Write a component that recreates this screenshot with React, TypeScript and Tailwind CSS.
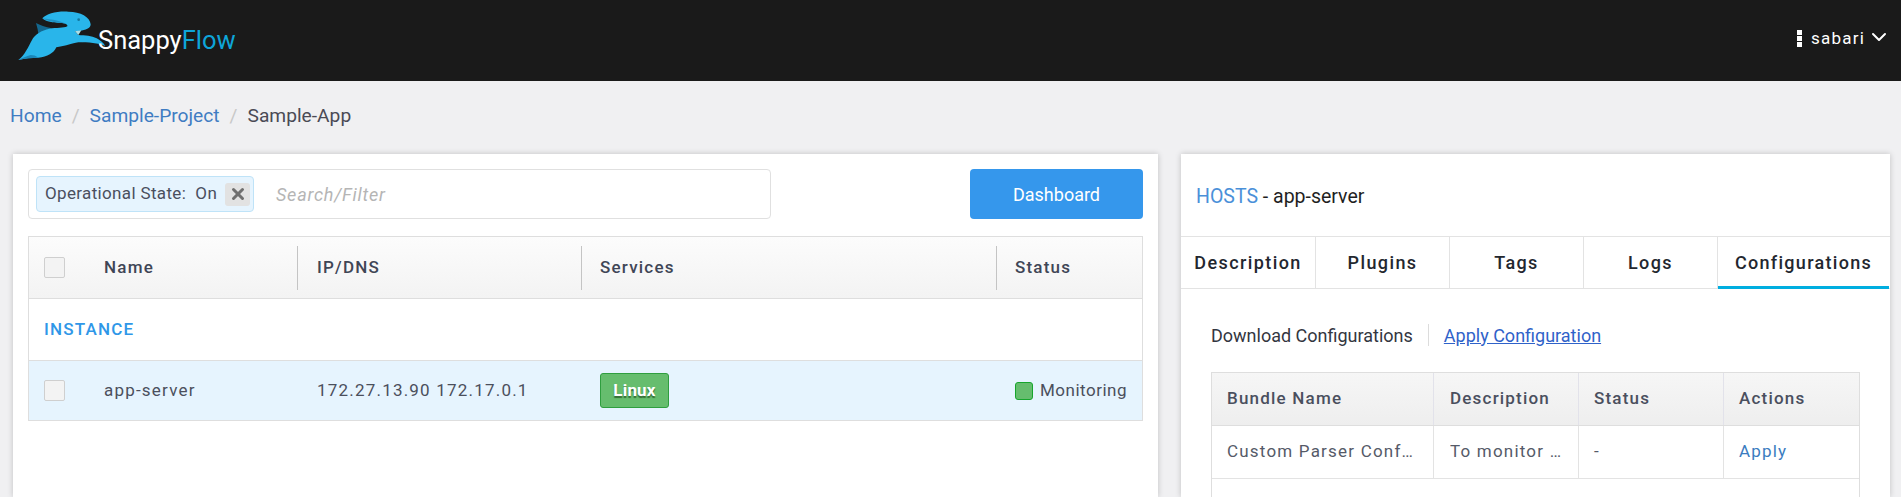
import { ChevronDown, X } from "lucide-react";

const font = "font-['Roboto',sans-serif]";

function Logo() {
  return (
    <div className="flex items-start pl-[10px] pt-[5px]">
      <svg width="96" height="60" viewBox="0 0 288 180" className="shrink-0">
        <path d="M78 54C90 60 105 66 126 70C105 78 92 85 85 92C85 80 82 68 78 54Z" fill="#14688f" />
        <path
          d="M25 165C45 150 55 125 66 105C74 88 95 76 118 71C140 68 160 70 172 64C174 59 165 54 150 54C130 54 108 50 97 40C110 26 140 18 175 20C212 20 240 36 242 58C242 70 226 76 210 77L195 79L205 90C225 91 245 92 260 100C270 106 280 113 286 123C265 114 235 112 205 112C190 114 175 120 155 124L139 127C132 144 112 156 85 158C65 158 45 160 25 165Z"
          fill="#29b5ea"
        />
        <path d="M97 40C110 48 130 52 150 54C160 54 168 56 172 60C160 49 125 43 97 40Z" fill="#1f93c4" />
        <path d="M25 165C45 160 65 158 85 158C78 152 70 150 62 150C50 154 36 159 25 165Z" fill="#1a86b8" />
        <path d="M195 79L214 76L205 90Z" fill="#a8dfe8" />
        <circle cx="206" cy="44" r="4" fill="#14789f" />
      </svg>
      <div className="-ml-[8px] mt-[23px] text-[25.5px] leading-none">
        <span className="text-white">Snappy</span>
        <span className="text-[#0ea5d8]">Flow</span>
      </div>
    </div>
  );
}

function Checkbox() {
  return <div className="h-[21px] w-[21px] rounded-[2px] border border-[#cfcfcf] bg-[#f3f3f3]" />;
}

function HeadCell({ label, className }: { label: string; className: string }) {
  return (
    <div className={`flex h-full items-center ${className}`}>
      <span className="text-[17px] font-medium tracking-[1.2px] text-[#3f4656]">{label}</span>
    </div>
  );
}

function HostTable() {
  return (
    <div className="mt-[17px] border border-[#dedede]">
      <div className="flex h-[62px] items-center border-b border-[#dedede] bg-gradient-to-b from-[#fcfcfc] to-[#f3f3f3]">
        <div className="flex w-[75px] justify-start pl-[15px]">
          <Checkbox />
        </div>
        <HeadCell label="Name" className="w-[193px]" />
        <div className="h-[44px] w-px bg-[#c4c4c4]" />
        <HeadCell label="IP/DNS" className="w-[283px] pl-[19px]" />
        <div className="h-[44px] w-px bg-[#c4c4c4]" />
        <HeadCell label="Services" className="w-[414px] pl-[18px]" />
        <div className="h-[44px] w-px bg-[#c4c4c4]" />
        <HeadCell label="Status" className="flex-1 pl-[18px]" />
      </div>
      <div className="flex h-[62px] items-center border-b border-[#dedede] pl-[15px] text-[17px] font-medium tracking-[1.2px] text-[#2f97e8]">
        INSTANCE
      </div>
      <div className="flex h-[59px] items-center bg-[#e6f4fe] text-[17px] tracking-[1.2px] text-[#4b4f5c]">
        <div className="flex w-[75px] pl-[15px]">
          <Checkbox />
        </div>
        <div className="w-[194px]">app-server</div>
        <div className="w-[284px] pl-[19px]">172.27.13.90 172.17.0.1</div>
        <div className="w-[415px] pl-[18px]">
          <span className="flex h-[35px] w-[69px] items-center justify-center rounded-[3px] border border-[#2f9e3f] bg-[#66bd6e] text-[17px] font-bold tracking-[0.2px] text-white [text-shadow:0_2px_1px_rgba(40,90,40,0.8)]">
            Linux
          </span>
        </div>
        <div className="flex flex-1 items-center pl-[18px]">
          <span className="h-[18px] w-[18px] rounded-[3px] border border-[#17a52d] bg-[#66bd6e]" />
          <span className="ml-[7px] tracking-[0.5px]">Monitoring</span>
        </div>
      </div>
    </div>
  );
}

function Tabs() {
  const tabs = ["Description", "Plugins", "Tags", "Logs"];
  return (
    <div className="flex h-[53px] border-y border-[#e3e3e3]">
      {tabs.map((t) => (
        <div
          key={t}
          className="flex w-[134px] items-center justify-center border-r border-[#e3e3e3] text-[18px] font-medium tracking-[1.4px] text-[#23272f] first:w-[135px]"
        >
          {t}
        </div>
      ))}
      <div className="-mb-px mr-px flex flex-1 items-center justify-center border-b-[3px] border-[#00aee0] pt-[2px] text-[18px] font-medium tracking-[1.3px] text-[#23272f]">
        Configurations
      </div>
    </div>
  );
}

function BundleTable() {
  return (
    <div className="mt-[26px] border-x border-t border-[#dedede]">
      <div className="grid h-[53px] grid-cols-[221px_145px_145px_1fr] border-b border-[#dedede] bg-gradient-to-b from-[#f6f6f6] to-[#eeeeee] text-[17px] font-medium tracking-[1.2px] text-[#4a4f5e]">
        <div className="flex items-center pl-[15px]">Bundle Name</div>
        <div className="flex items-center border-l border-[#e2e2ea] pl-[16px]">Description</div>
        <div className="flex items-center border-l border-[#e2e2ea] pl-[15px]">Status</div>
        <div className="flex items-center border-l border-[#e2e2ea] pl-[15px]">Actions</div>
      </div>
      <div className="grid h-[53px] grid-cols-[221px_145px_145px_1fr] border-b border-[#e3e3e3] text-[17px] tracking-[1.2px] text-[#555a68]">
        <div className="flex min-w-0 items-center pl-[15px] pr-[17px]">
          <span className="truncate">Custom Parser Configuration</span>
        </div>
        <div className="flex min-w-0 items-center border-l border-[#e3e3e3] pl-[16px] pr-[14px]">
          <span className="truncate">To monitor custom logs</span>
        </div>
        <div className="flex items-center border-l border-[#e3e3e3] pl-[15px]">-</div>
        <div className="flex items-center border-l border-[#e3e3e3] pl-[15px] text-[#3b7cc0]">Apply</div>
      </div>
      <div className="h-[40px]" />
    </div>
  );
}

export default function App() {
  return (
    <div className={`${font} flex h-[497px] flex-col overflow-hidden bg-[#f0f0f2]`}>
      <header className="flex h-[81px] shrink-0 items-start justify-between bg-[#1a1a1a]">
        <Logo />
        <div className="mr-[10px] mt-[26px] flex items-center text-[17px] tracking-[1.2px] text-white">
          <div className="mr-[9px] flex flex-col gap-[1px]">
            <span className="h-[5px] w-[5px] bg-white" />
            <span className="h-[5px] w-[5px] bg-white" />
            <span className="h-[5px] w-[5px] bg-white" />
          </div>
          sabari
          <ChevronDown size={24} strokeWidth={2} className="-mt-[4px] ml-[2px]" />
        </div>
      </header>

      <nav className="flex h-[73px] shrink-0 items-center pb-[3px] pl-[10px] text-[19.2px]">
        <span className="text-[#3f7cc2]">Home</span>
        <span className="mx-[10px] text-[#c8c8c8]">/</span>
        <span className="text-[#3f7cc2]">Sample-Project</span>
        <span className="mx-[10px] text-[#c8c8c8]">/</span>
        <span className="text-[#4a4a55]">Sample-App</span>
      </nav>

      <main className="flex min-h-0 flex-1 pl-[13px] pr-[11px]">
        <section className="w-[1145px] bg-white px-[15px] pt-[15px] shadow-[0_0_6px_rgba(0,0,0,0.2)]">
          <div className="flex items-start justify-between">
            <div className="flex h-[50px] w-[743px] items-center rounded-[4px] border border-[#e0e0e0] pl-[7px]">
              <div className="flex h-[36px] w-[218px] items-center rounded-[4px] border border-[#bfe3f8] bg-[#e6f4fe] pl-[8px] pr-[3px] text-[17px] tracking-[0.35px] text-[#4a4f5e]">
                <span className="whitespace-pre">Operational State:  On</span>
                <span className="ml-auto flex h-[23px] w-[25px] shrink-0 items-center justify-center rounded-[3px] bg-[#e2e2e2]">
                  <X size={18} strokeWidth={4} className="text-[#6f6f6f]" />
                </span>
              </div>
              <span className="ml-[22px] text-[18px] italic tracking-[0.75px] text-[#b5b5b5]">Search/Filter</span>
            </div>
            <button className="flex h-[50px] w-[173px] items-center justify-center rounded-[4px] bg-[#3597ec] text-[18px] text-white">
              Dashboard
            </button>
          </div>
          <HostTable />
        </section>

        <section className="ml-[23px] flex-1 bg-white pt-[1px] shadow-[0_0_6px_rgba(0,0,0,0.2)]">
          <div className="flex h-[81px] items-center pl-[15px] pt-[3px] text-[19.5px] text-[#1f1f1f]">
            <span className="text-[#4a90d9]">HOSTS</span>
            <span className="whitespace-pre"> - app-server</span>
          </div>
          <Tabs />
          <div className="px-[30px] pt-[35px]">
            <div className="flex h-[22px] items-center text-[18px]">
              <span className="text-[#33363f]">Download Configurations</span>
              <span className="ml-[15px] h-[22px] w-px bg-[#dcdcdc]" />
              <span className="ml-[15px] text-[#2f62c9] underline">Apply Configuration</span>
            </div>
            <BundleTable />
          </div>
        </section>
      </main>
    </div>
  );
}
